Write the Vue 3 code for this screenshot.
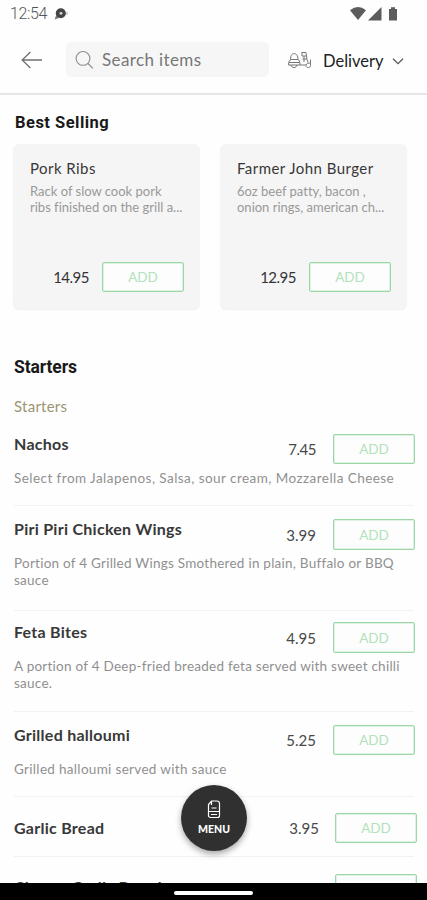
<script setup>
const best = [
  { name: 'Pork Ribs', lines: ['Rack of slow cook pork', 'ribs finished on the grill a...'], price: '14.95' },
  { name: 'Farmer John Burger', lines: ['6oz beef patty, bacon ,', 'onion rings, american ch...'], price: '12.95' },
]
const starters = [
  { id: 'nachos', name: 'Nachos', lines: ['Select from Jalapenos, Salsa, sour cream, Mozzarella Cheese'], price: '7.45' },
  { id: 'wings', name: 'Piri Piri Chicken Wings', lines: ['Portion of 4 Grilled Wings Smothered in plain, Buffalo or BBQ', 'sauce'], price: '3.99' },
  { id: 'feta', name: 'Feta Bites', lines: ['A portion of 4 Deep-fried breaded feta served with sweet chilli', 'sauce.'], price: '4.95' },
  { id: 'halloumi', name: 'Grilled halloumi', lines: ['Grilled halloumi served with sauce'], price: '5.25' },
  { id: 'garlic', name: 'Garlic Bread', lines: [], price: '3.95' },
  { id: 'cheesy', name: 'Cheesy Garlic Bread', lines: [], price: '' },
]
</script>

<template>
  <div class="screen">
    <div class="status">
      <span class="time">12:54</span>
      <svg class="notif" width="16" height="14" viewBox="0 0 16 14">
        <path d="M.5 12.500l1.800-4.500L5 11z" fill="#777" />
        <circle cx="6.800" cy="6.300" r="5" fill="#444" />
        <circle cx="7" cy="6.300" r="1.400" fill="#ddd" />
        <path d="M13 5v3" stroke="#aaa" />
      </svg>
      <svg class="signals" width="50" height="16" viewBox="0 0 50 16">
        <path d="M0 4.200Q8-2 16 4.200L8 14z" fill="#5c5c5c" />
        <path d="M31.500 1v13.500H18z" fill="#5c5c5c" />
        <path d="M39 3h2V1.300h4V3h2v11.500h-8z" fill="#5c5c5c" />
      </svg>
    </div>

    <header class="topbar">
      <svg class="back" width="22" height="18" viewBox="0 0 22 18" fill="none" stroke="#707070" stroke-width="1.3">
        <path d="M21 9H1.200M9.400 1L1.200 9l8.200 8" />
      </svg>
      <div class="search">
        <svg width="20" height="20" viewBox="0 0 20 20" fill="none" stroke="#8c8c8c" stroke-width="1.1">
          <circle cx="8" cy="8.400" r="6.900" />
          <path d="M13 13.500l4.800 4.800" />
        </svg>
        <span class="placeholder">Search items</span>
      </div>
      <svg class="scooter" width="26" height="20" viewBox="0 0 26 20" fill="none" stroke="#777" stroke-width="1">
        <path d="M3.500 9.500C3.500 5.500 5 3.600 7.200 3.600s3.800 1.900 3.800 5.900zM1.500 15c0-3 1-5.500 3-5.500h6c1.500 0 2.500 2 2.500 5.500zM2 12.500h10.500M4 15c0 3.300 6 3.300 6 0M13 15h6M14.500 2.500h4.500l1 7M15 2.500V6h4.500M15.500 9h4.500M17 6v6M20 9.500l1 3M23.500 9.500v6c0 2.800-4.500 2.800-4.500 0 0-2.500 3-2.500 4.500-2.500" />
      </svg>
      <span class="mode">Delivery</span>
      <svg class="chevron" width="12" height="8" viewBox="0 0 12 8" fill="none" stroke="#555" stroke-width="1.200">
        <path d="M1 1.800l5 4.900 5-4.900" />
      </svg>
    </header>

    <main>
      <h2 class="best-title">Best Selling</h2>
      <div class="cards">
        <article v-for="b in best" :key="b.name" class="card">
          <h3>{{ b.name }}</h3>
          <p><span v-for="l in b.lines" :key="l">{{ l }}</span></p>
          <div class="buy">
            <span class="price">{{ b.price }}</span>
            <button class="add">ADD</button>
          </div>
        </article>
      </div>

      <h2 class="section">Starters</h2>
      <div class="sub">Starters</div>

      <section v-for="s in starters" :key="s.id" class="row" :class="[s.id, { plain: !s.lines.length }]">
        <div class="line">
          <h4>{{ s.name }}</h4>
          <span class="price">{{ s.price }}</span>
          <button class="add">ADD</button>
        </div>
        <p v-if="s.lines.length"><span v-for="l in s.lines" :key="l">{{ l }}</span></p>
      </section>
    </main>

    <button class="menu">
      <svg width="14" height="19" viewBox="0 0 14 19" fill="none" stroke="#fff" stroke-width="1.200">
        <path d="M4.500 1H10a2.500 2.500 0 0 1 2.500 2.500V15.500a2 2 0 0 1-2 2h-7a2 2 0 0 1-2-2V4.500zM4.500 1v4M4.500 8h5M1.500 11.500h11M4 14.500h6" />
      </svg>
      <span>MENU</span>
    </button>
    <div class="navbar"><i></i></div>
  </div>
</template>

<style scoped>
.screen {
  position: relative;
  width: 427px;
  height: 900px;
  overflow: hidden;
  background: #fefefe;
  font-family: Lato, "Liberation Sans", sans-serif;
  font-variant-ligatures: none;
}
h2, h3, h4, p { margin: 0; white-space: nowrap; }
p span { display: block; }
button { font: inherit; padding: 0; }
svg { flex: none; display: block; }

.status { display: flex; align-items: center; height: 28px; padding: 0 27px 0 10px; }
.time { width: 44px; font: 300 16px/28px Roboto, sans-serif; color: #555; letter-spacing: -0.4px; }
.signals { margin-left: auto; }

.topbar {
  display: flex;
  align-items: center;
  box-sizing: border-box;
  height: 67px;
  padding: 0 23px 2px 21px;
  border-bottom: 2px solid #e6e6e6;
}
.search {
  display: flex;
  align-items: center;
  box-sizing: border-box;
  width: 203px;
  height: 35px;
  margin-left: 23px;
  padding-left: 9px;
  background: #f6f6f6;
  border-radius: 5px;
}
.placeholder { margin-left: 7px; font-size: 17px; letter-spacing: 0.380px; color: #777; white-space: nowrap; }
.scooter { margin-left: 18px; }
.mode { width: 68px; margin: 2px 0 0 10px; font-size: 16.500px; color: #222; white-space: nowrap; }
.chevron { margin: 2px 0 0 1px; }

.best-title, .section { font-family: Roboto, sans-serif; font-weight: 700; color: #191919; }
.best-title { padding: 17px 0 0 15px; font-size: 16.500px; line-height: 21px; letter-spacing: 0.480px; }
.cards { display: flex; gap: 20px; padding: 11px 0 0 13px; }
.card {
  box-sizing: border-box;
  width: 187px;
  height: 165px;
  padding: 14px 16px 0 17px;
  background: #f5f5f5;
  border-radius: 6px;
  box-shadow: 0 1px 1px rgba(0, 0, 0, 0.06);
  display: flex;
  flex-direction: column;
}
.card h3 { font-size: 15px; font-weight: 400; line-height: 21px; letter-spacing: 0.450px; color: #383838; }
.card p { padding-top: 4px; font-size: 13px; line-height: 16px; color: #999; }
.buy { display: flex; align-items: center; justify-content: flex-end; margin-top: 47px; }
.buy .price { margin-right: 13px; letter-spacing: -0.500px; color: #333; }
.price { font-size: 15px; letter-spacing: 0; color: #484848; }
.nachos .price { letter-spacing: -0.500px; }
.add {
  box-sizing: border-box;
  width: 82px;
  height: 30px;
  border: 1px solid #9bd8a6;
  border-radius: 2px;
  background: #fdfdfd;
  box-shadow: inset 0 0 0 1px rgba(155, 216, 166, 0.300);
  color: #b2e2bb;
  font-size: 13.500px;
}

.section { padding: 48px 0 0 14px; font-size: 17.500px; line-height: 21px; letter-spacing: -0.100px; }
.sub { padding: 18px 0 0 14px; font-size: 15px; line-height: 20px; letter-spacing: 0.250px; color: #9c9473; }

.row { box-sizing: border-box; margin: 0 13px 0 14px; border-bottom: 1px solid #f2f2f2; }
.line { display: flex; align-items: center; margin-right: -1px; }
.line h4 { flex: 1; min-width: 0; margin-top: -11px; font-size: 16px; font-weight: 700; line-height: 20px; letter-spacing: 0.270px; color: #383838; }
.line .price { margin-right: 17px; }
.row p { padding-top: 6px; font-size: 13.500px; line-height: 17px; letter-spacing: 0.250px; color: #909090; }
.nachos p { letter-spacing: 0.450px; }
.nachos { height: 89px; padding-top: 17px; margin-top: 1px; }
.wings { height: 105px; padding-top: 13px; }
.wings p, .feta p { padding-top: 5px; }
.wings .add, .feta .add { height: 31px; }
.feta { height: 101px; padding-top: 11px; }
.halloumi { height: 85px; padding-top: 13px; }
.halloumi p { letter-spacing: 0.320px; }
.garlic { height: 60px; padding-top: 16px; }
.cheesy { height: 60px; padding-top: 17px; }
.plain .line { margin-right: -3px; }
.plain .line h4 { margin-top: -1px; }
.cheesy .line h4 { margin-top: -4px; }
.plain .price { margin-right: 16px; }

.menu {
  position: absolute;
  left: 181px;
  top: 785px;
  width: 66px;
  height: 66px;
  border: 0;
  border-radius: 50%;
  background: #303030;
  box-shadow: 0 3px 6px rgba(0, 0, 0, 0.350);
  color: #fff;
  display: flex;
  flex-direction: column;
  align-items: center;
  padding-top: 15px;
}
.menu span { margin-top: 3px; font-size: 10.500px; font-weight: 900; line-height: 14px; }
.navbar {
  position: absolute;
  left: 0;
  right: 0;
  bottom: 0;
  height: 17px;
  background: #000;
  display: flex;
  justify-content: center;
  align-items: center;
}
.navbar i { width: 79px; height: 4px; margin-top: 2px; border-radius: 2px; background: #fff; }
</style>
